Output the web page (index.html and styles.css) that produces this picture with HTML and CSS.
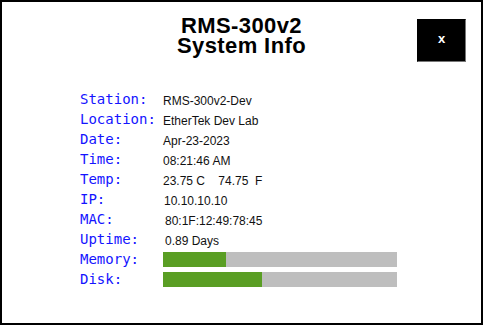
FILE: index.html
```html
<!DOCTYPE html>
<html>
<head>
<meta charset="utf-8">
<link rel="stylesheet" href="styles.css">
</head>
<body>
<div class="window">
  <div class="header">
    <div class="spacer"></div>
    <h1 class="title"><span class="line">RMS-300v2</span><span class="line">System Info</span></h1>
    <button class="close">x</button>
  </div>
  <div class="info">
    <div class="label">Station:</div><div class="value">RMS-300v2-Dev</div>
    <div class="label">Location:</div><div class="value">EtherTek Dev Lab</div>
    <div class="label">Date:</div><div class="value">Apr-23-2023</div>
    <div class="label">Time:</div><div class="value">08:21:46 AM</div>
    <div class="label">Temp:</div><div class="value pre">23.75 C    74.75  F</div>
    <div class="label">IP:</div><div class="value v1">10.10.10.10</div>
    <div class="label">MAC:</div><div class="value v2">80:1F:12:49:78:45</div>
    <div class="label">Uptime:</div><div class="value v2">0.89 Days</div>
    <div class="label">Memory:</div><div class="bar-cell"><div class="bar"><div class="fill" style="width:27%"></div></div></div>
    <div class="label">Disk:</div><div class="bar-cell"><div class="bar"><div class="fill" style="width:42.3%"></div></div></div>
  </div>
</div>
</body>
</html>
```
FILE: styles.css
```css
* { box-sizing: border-box; }
html, body { margin: 0; padding: 0; background: #fff; }
.window {
  width: 483px;
  height: 325px;
  border: 2px solid #000;
  background: #fff;
  font-family: "Liberation Sans", Arial, sans-serif;
}
.header {
  display: grid;
  grid-template-columns: 1fr auto 1fr;
  align-items: start;
  padding: 14px 15px 0 15px;
  height: 87px;
}
.title {
  margin: 0;
  font-size: 22px;
  line-height: 20px;
  letter-spacing: 0.4px;
  font-weight: bold;
  text-align: center;
  color: #000;
}
.line { display: block; }
.close {
  justify-self: end;
  margin-top: 3px;
  width: 49px;
  height: 43px;
  background: #000;
  color: #fff;
  border: 1px solid;
  border-color: #000 #777 #777 #000;
  font-family: "Liberation Sans", Arial, sans-serif;
  font-weight: bold;
  font-size: 13px;
  padding: 0 0 4px 0;
  line-height: 1;
}
.info {
  display: grid;
  grid-template-columns: 83px 234px;
  grid-auto-rows: 20px;
  padding-left: 78px;
}
.label {
  font-family: "DejaVu Sans Mono", monospace;
  font-size: 14px;
  line-height: 20px;
  color: #1414ff;
  white-space: nowrap;
}
.value {
  font-size: 12px;
  line-height: 20px;
  padding-top: 2px;
  color: #111;
  white-space: nowrap;
}
.pre { white-space: pre; }
.v1 { padding-left: 1px; }
.v2 { padding-left: 2px; }
.bar-cell {
  display: flex;
  align-items: center;
}
.bar {
  width: 234px;
  height: 15px;
  background: #bebebe;
}
.fill {
  height: 100%;
  background: #5a9e24;
}
```
